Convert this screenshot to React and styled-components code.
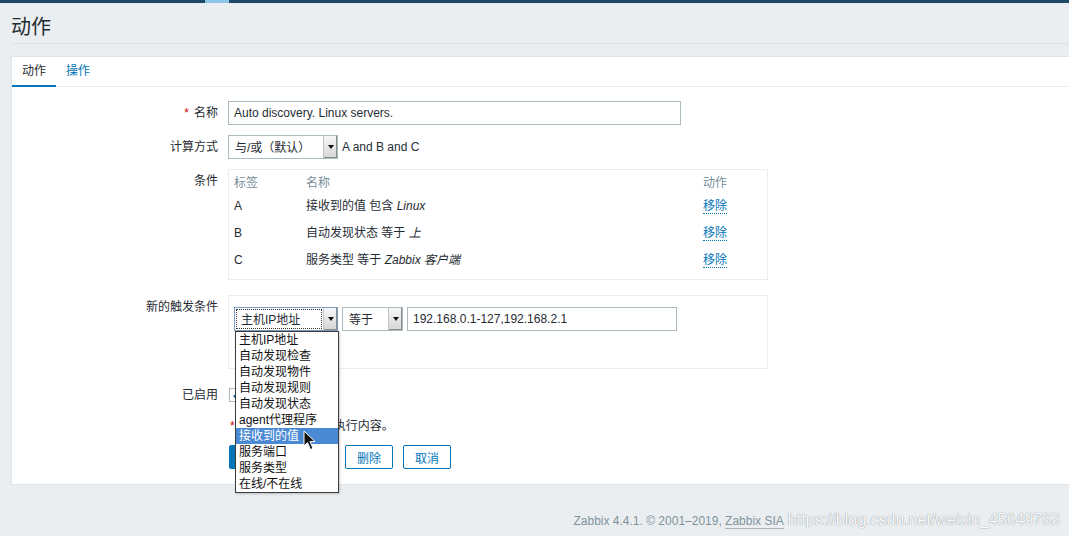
import React from "react";
import styled, { createGlobalStyle, css } from "styled-components";

const GlobalStyle = createGlobalStyle`
    html, body {
        margin: 0;
        padding: 0;
        background-color: #ebeef0;
        overflow: hidden;
    }

    body {
        font-family: "Liberation Sans", "Noto Sans CJK SC", sans-serif;
        font-size: 12px;
        color: #1f2c33;
    }
`;

const TopBar = styled.div`
    display: flex;
    height: 3px;
    background-color: #1d4966;

    .seg {
        margin-left: 205px;
        width: 24px;
        background-color: #8ec6ea;
    }
`;

const PageHeader = styled.h1`
    margin: 0 0 0 11px;
    height: 41px;
    display: flex;
    align-items: center;
    padding-top: 5px;
    box-sizing: border-box;
    font-size: 20px;
    font-weight: normal;
    color: #1f2c33;
    border-bottom: 1px solid #dfe3e6;
`;

const Panel = styled.div`
    margin: 12px -20px 0 11px;
    background-color: #fff;
    border: 1px solid #dfe4e7;
`;

const TabBar = styled.ul`
    display: flex;
    margin: 0;
    padding: 0;
    list-style: none;
    border-bottom: 1px solid #ebeef0;
`;

const Tab = styled.li`
    padding: 0 10px;
    line-height: 28px;
    border-bottom: 2px solid transparent;
    margin-bottom: -1px;
    color: #0275b8;

    ${(p) =>
        p.$active &&
        css`
            color: #1f2c33;
            border-bottom-color: #0275b8;
        `}
`;

const Form = styled.div`
    padding: 14px 0 15px;
`;

const Row = styled.div`
    display: grid;
    grid-template-columns: 206px 1fr;
    column-gap: 10px;
    margin-top: ${(p) => p.$mt || 0}px;
`;

const Label = styled.div`
    text-align: right;
    line-height: 24px;

    .req {
        color: #d40000;
        margin-right: 5px;
    }
`;

const Field = styled.div`
    display: flex;
    align-items: center;
    gap: 4px;
    position: relative;
`;

const TextInput = styled.div`
    box-sizing: border-box;
    width: ${(p) => p.$w}px;
    height: 24px;
    line-height: 22px;
    padding: 0 5px;
    border: 1px solid #acbbc2;
    background: #fff;
    white-space: nowrap;
`;

const SelectBox = styled.div`
    box-sizing: border-box;
    width: ${(p) => p.$w}px;
    height: 24px;
    display: flex;
    align-items: stretch;
    justify-content: space-between;
    border: 1px solid ${(p) => (p.$focus ? "#7a9cc0" : "#acbbc2")};
    background: #fff;
    position: relative;

    .val {
        line-height: 20px;
        margin: 1px 1px;
        padding: 0 4px;
        white-space: nowrap;
        border: 1px dotted ${(p) => (p.$focus ? "#333" : "transparent")};
        flex: 1;
    }
`;

const Arrow = styled.span`
    width: 13px;
    background: linear-gradient(#f6f6f6, #d6d6d6);
    border-left: 1px solid #c4c4c4;
    box-shadow: inset -1px -1px 0 #8c8c8c;
    display: flex;
    align-items: center;
    justify-content: center;

    &::after {
        content: "";
        border-left: 3px solid transparent;
        border-right: 3px solid transparent;
        border-top: 4px solid #111;
    }
`;

const Note = styled.span`
    white-space: nowrap;
`;

const Box = styled.div`
    box-sizing: border-box;
    width: 540px;
    border: 1px solid #ebeef0;
    padding: ${(p) => p.$pad};
    height: ${(p) => (p.$h ? `${p.$h}px` : "auto")};
`;

const CondGrid = styled.div`
    display: grid;
    grid-template-columns: 72px 397px 1fr;
    padding: 0 5px;
`;

const HeadCell = styled.div`
    height: 22px;
    line-height: 22px;
    color: #768d99;
`;

const Cell = styled.div`
    height: 27px;
    padding-top: 4px;
    box-sizing: border-box;
    line-height: 16px;

    em {
        font-style: italic;
    }
`;

const LinkBtn = styled.span`
    color: #0275b8;
    border-bottom: 1px dotted #0275b8;
`;

const AddLink = styled.div`
    margin-top: 9px;
    color: #0275b8;
`;

const DropList = styled.ul`
    position: absolute;
    top: 23px;
    left: 0;
    z-index: 5;
    width: 104px;
    box-sizing: border-box;
    margin: 0;
    padding: 0;
    list-style: none;
    background: #fff;
    border: 1px solid #3c3c3c;
    box-shadow: 1px 1px 2px rgba(0, 0, 0, 0.2);
`;

const DropItem = styled.li`
    height: 16px;
    line-height: 16px;
    padding: 0 3px;
    font-size: 12px;
    color: #111;
    white-space: nowrap;

    ${(p) =>
        p.$hl &&
        css`
            background-color: #4a89d3;
            color: #fff;
        `}
`;

const Cursor = styled.svg`
    position: absolute;
    left: 67px;
    top: 98px;
    width: 13px;
    height: 21px;
`;

const Check = styled.span`
    width: 14px;
    height: 14px;
    box-sizing: border-box;
    border: 1px solid #acbbc2;
    margin-left: 1px;
    display: flex;
    align-items: center;
    justify-content: center;
    color: #0275b8;
    font-size: 11px;
`;

const ErrorText = styled.div`
    line-height: 18px;
    padding-left: 2px;
    white-space: nowrap;

    .req {
        color: #d40000;
        margin-right: 3px;
    }
`;

const Buttons = styled.div`
    display: flex;
    gap: 10px;
    margin-left: 1px;
`;

const Button = styled.button`
    height: 24px;
    padding: 0 11px;
    font-family: inherit;
    font-size: 12px;
    border-radius: 2px;
    border: 1px solid #0275b8;
    background: #fff;
    color: #0275b8;

    ${(p) =>
        p.$primary &&
        css`
            background: #0275b8;
            color: #fff;
        `}
`;

const Footer = styled.div`
    display: flex;
    justify-content: flex-end;
    align-items: baseline;
    margin-top: 26px;
    padding-right: 9px;
    white-space: nowrap;

    .copy {
        font-size: 12px;
        color: #7f939d;
    }

    .copy u {
        text-decoration: none;
        border-bottom: 1px solid #aab6bd;
    }

    .mark {
        margin-left: 4px;
        font-size: 16px;
        color: rgba(255, 255, 255, 0.95);
        text-shadow: 0 0 1px #9aa3a8, 0 0 1px #9aa3a8;
    }
`;

const conditions = [
    { tag: "A", text: "接收到的值 包含 ", val: "Linux" },
    { tag: "B", text: "自动发现状态 等于 ", val: "上" },
    { tag: "C", text: "服务类型 等于 ", val: "Zabbix 客户端" },
];

const options = [
    "主机IP地址",
    "自动发现检查",
    "自动发现物件",
    "自动发现规则",
    "自动发现状态",
    "agent代理程序",
    "接收到的值",
    "服务端口",
    "服务类型",
    "在线/不在线",
];

function App() {
    return (
        <>
            <GlobalStyle />
            <TopBar>
                <span className="seg" />
            </TopBar>
            <PageHeader>动作</PageHeader>

            <Panel>
                <TabBar>
                    <Tab $active>动作</Tab>
                    <Tab>操作</Tab>
                </TabBar>

                <Form>
                    <Row>
                        <Label>
                            <span className="req">*</span>名称
                        </Label>
                        <Field>
                            <TextInput $w={453}>Auto discovery. Linux servers.</TextInput>
                        </Field>
                    </Row>

                    <Row $mt={10}>
                        <Label>计算方式</Label>
                        <Field>
                            <SelectBox $w={110}>
                                <span className="val">与/或（默认）</span>
                                <Arrow />
                            </SelectBox>
                            <Note>A and B and C</Note>
                        </Field>
                    </Row>

                    <Row $mt={10}>
                        <Label>条件</Label>
                        <Box $pad="2px 0 4px">
                            <CondGrid>
                                <HeadCell>标签</HeadCell>
                                <HeadCell>名称</HeadCell>
                                <HeadCell>动作</HeadCell>
                                {conditions.map((c) => (
                                    <React.Fragment key={c.tag}>
                                        <Cell>{c.tag}</Cell>
                                        <Cell>
                                            {c.text}
                                            <em>{c.val}</em>
                                        </Cell>
                                        <Cell>
                                            <LinkBtn>移除</LinkBtn>
                                        </Cell>
                                    </React.Fragment>
                                ))}
                            </CondGrid>
                        </Box>
                    </Row>

                    <Row $mt={15}>
                        <Label>新的触发条件</Label>
                        <Box $pad="11px 5px 0" $h={74}>
                            <Field>
                                <SelectBox $w={104} $focus>
                                    <span className="val">主机IP地址</span>
                                    <Arrow />
                                    <DropList>
                                        {options.map((o, idx) => (
                                            <DropItem key={o} $hl={idx === 6}>
                                                {o}
                                            </DropItem>
                                        ))}
                                        <Cursor viewBox="0 0 13 21">
                                            <path
                                                d="M1 1 L1 16 L4.5 12.5 L7.5 19.5 L10 18.5 L7 11.5 L12 11.5 Z"
                                                fill="#111"
                                                stroke="#fff"
                                                strokeWidth="1"
                                            />
                                        </Cursor>
                                    </DropList>
                                </SelectBox>
                                <SelectBox $w={61}>
                                    <span className="val">等于</span>
                                    <Arrow />
                                </SelectBox>
                                <TextInput $w={270}>192.168.0.1-127,192.168.2.1</TextInput>
                            </Field>
                            <AddLink>添加</AddLink>
                        </Box>
                    </Row>

                    <Row $mt={14}>
                        <Label>已启用</Label>
                        <Field>
                            <Check>✔</Check>
                        </Field>
                    </Row>

                    <Row $mt={10}>
                        <span />
                        <ErrorText>
                            <span className="req">*</span>必须设置至少一个执行内容。
                        </ErrorText>
                    </Row>

                    <Row $mt={10}>
                        <span />
                        <Buttons>
                            <Button $primary>更新</Button>
                            <Button>克隆</Button>
                            <Button>删除</Button>
                            <Button>取消</Button>
                        </Buttons>
                    </Row>
                </Form>
            </Panel>

            <Footer>
                <span className="copy">
                    Zabbix 4.4.1. © 2001–2019, <u>Zabbix SIA</u>
                </span>
                <span className="mark">https://blog.csdn.net/weixin_45649763</span>
            </Footer>
        </>
    );
}

export default App;
